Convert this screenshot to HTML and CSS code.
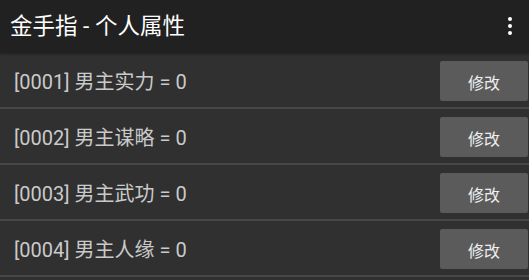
FILE: index.html
```html
<!DOCTYPE html>
<html lang="zh">
<head>
<meta charset="utf-8">
<title>金手指 - 个人属性</title>
<link rel="stylesheet" href="styles.css">
</head>
<body>
<header class="appbar">
  <h1 class="title">金手指 - 个人属性</h1>
  <button class="menu" aria-label="更多">
    <svg width="4" height="18" viewBox="0 0 4 18"><circle cx="2" cy="2" r="2" fill="#fff"/><circle cx="2" cy="9" r="2" fill="#fff"/><circle cx="2" cy="16" r="2" fill="#fff"/></svg>
  </button>
</header>
<ul class="list">
  <li class="row"><span class="label">[0001] 男主实力 = 0</span><button class="edit">修改</button></li>
  <li class="row"><span class="label">[0002] 男主谋略 = 0</span><button class="edit">修改</button></li>
  <li class="row"><span class="label">[0003] 男主武功 = 0</span><button class="edit">修改</button></li>
  <li class="row"><span class="label">[0004] 男主人缘 = 0</span><button class="edit">修改</button></li>
</ul>
</body>
</html>
```
FILE: styles.css
```css
html, body {
  margin: 0;
  padding: 0;
  background: #303030;
  font-family: Roboto, "Noto Sans CJK SC", sans-serif;
  overflow: hidden;
}
.appbar {
  height: 53px;
  background: #212121;
  display: flex;
  align-items: center;
  justify-content: space-between;
  padding: 0 0 0 10px;
  box-shadow: 0 1px 2px rgba(0,0,0,0.35);
  position: relative;
  z-index: 1;
}
.title {
  margin: 0;
  font-size: 22.5px;
  font-weight: 400;
  color: #ffffff;
  line-height: 1;
  padding-bottom: 1px;
}
.menu {
  background: none;
  border: 0;
  padding: 0;
  margin-right: 17px;
  width: 4px;
  height: 18px;
  display: flex;
  margin-bottom: 2px;
}
.list {
  list-style: none;
  margin: 0;
  padding: 0;
}
.row {
  height: 40px;
  padding: 8px 1px 6px 14px;
  border-bottom: 2px solid #474747;
  display: flex;
  align-items: center;
  justify-content: space-between;
}
.label {
  font-size: 20px;
  color: #cacaca;
  line-height: 1;
  padding-top: 2px;
}
.edit {
  width: 88px;
  height: 40px;
  background: #5b5b5b;
  border: 0;
  border-radius: 2px;
  color: #eeeeee;
  font-family: Roboto, "Noto Sans CJK SC", sans-serif;
  font-size: 16px;
  padding: 0;
  padding-top: 1px;
}
```
